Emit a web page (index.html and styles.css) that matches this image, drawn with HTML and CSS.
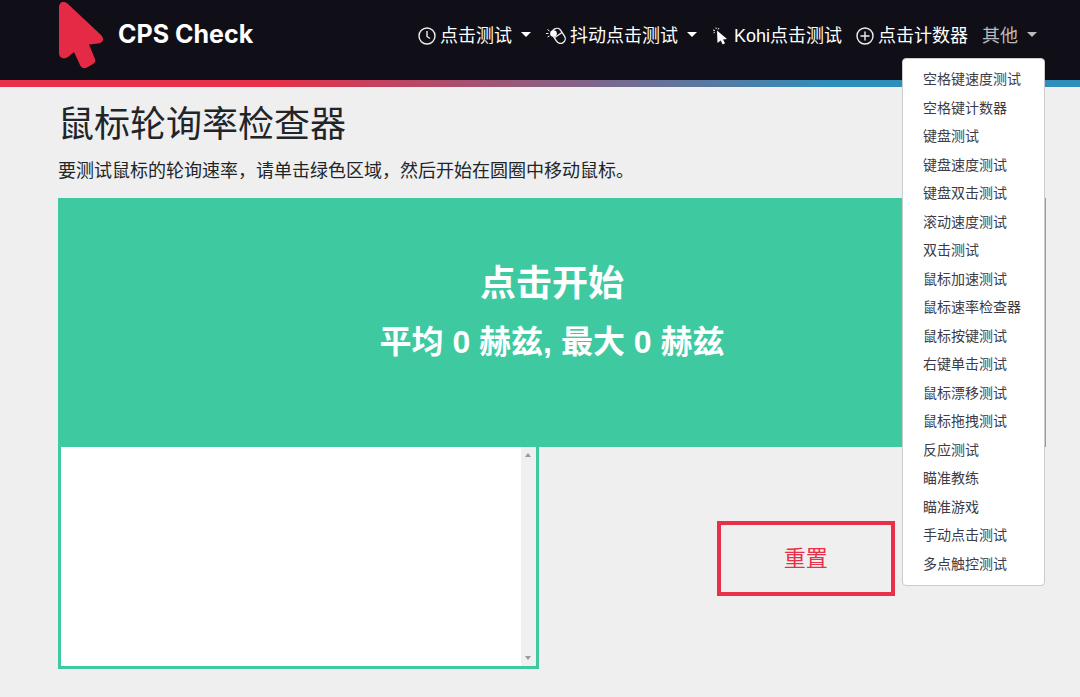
FILE: index.html
```html
<!DOCTYPE html>
<html lang="zh-CN">
<head>
	<meta charset="UTF-8">
	<meta name="viewport" content="width=device-width, initial-scale=1.0">
	<link rel="stylesheet" href="styles.css">
	<title>CPS Check</title>
</head>
<body>
	<header class="navbar">
		<a class="brand" href="#">
			<svg class="brand-logo" width="46" height="67" viewBox="0 0 46 67">
				<path d="M1 5C1 0 6-2 10 2L43 33C47 37 45 41 40 41.500L31 42.500L37 57C38 59 37 61 35 62L29 65.500C26 67 23 66 22 63L16 50L10 55C6 58 1 56 1 51Z"/>
			</svg>
			<span>CPS Check</span>
		</a>
		<nav class="nav">
			<a class="nav-link" href="#">
				<svg class="icon" width="18" height="18" viewBox="0 0 18 18"><circle cx="9" cy="9" r="8"/><path d="M9 4v5.500l3 2"/></svg>
				点击测试<span class="caret"></span>
			</a>
			<a class="nav-link" href="#">
				<svg class="icon" width="20" height="18" viewBox="0 0 20 18"><rect x="8" y="1" width="9.500" height="16" rx="4.700" transform="rotate(-33 12.500 9)"/><path d="M8 11L16 5.500"/><circle class="fill" cx="7.500" cy="6.500" r="3.300"/><path d="M1.500 2.500l2 1.500M0 6.500h2.500M1.500 10l2-1" stroke-width="1"/></svg>
				抖动点击测试<span class="caret"></span>
			</a>
			<a class="nav-link" href="#">
				<svg class="icon" width="18" height="18" viewBox="0 0 18 18"><path class="fill" d="M5 3.500L15 12L11 12.400L13 16.200L10.700 17.400L8.700 13.400L5.500 16Z"/><path d="M1 3l2 .5M4 .5l.3 1.500M1.500 6l1.500-1M7 1l-1 1.500" stroke-width="1"/></svg>
				Kohi点击测试
			</a>
			<a class="nav-link" href="#">
				<svg class="icon" width="18" height="18" viewBox="0 0 18 18"><circle cx="9" cy="9" r="8"/><path d="M9 4.500v9M4.500 9h9"/></svg>
				点击计数器
			</a>
			<div class="dropdown">
				<a class="nav-link active" href="#">其他<span class="caret"></span></a>
				<ul class="dropdown-menu">
					<li><a href="#">空格键速度测试</a></li>
					<li><a href="#">空格键计数器</a></li>
					<li><a href="#">键盘测试</a></li>
					<li><a href="#">键盘速度测试</a></li>
					<li><a href="#">键盘双击测试</a></li>
					<li><a href="#">滚动速度测试</a></li>
					<li><a href="#">双击测试</a></li>
					<li><a href="#">鼠标加速测试</a></li>
					<li><a href="#">鼠标速率检查器</a></li>
					<li><a href="#">鼠标按键测试</a></li>
					<li><a href="#">右键单击测试</a></li>
					<li><a href="#">鼠标漂移测试</a></li>
					<li><a href="#">鼠标拖拽测试</a></li>
					<li><a href="#">反应测试</a></li>
					<li><a href="#">瞄准教练</a></li>
					<li><a href="#">瞄准游戏</a></li>
					<li><a href="#">手动点击测试</a></li>
					<li><a href="#">多点触控测试</a></li>
				</ul>
			</div>
		</nav>
	</header>
	<div class="stripe"></div>

	<main class="container">
		<h1>鼠标轮询率检查器</h1>
		<p class="intro">要测试鼠标的轮询速率，请单击绿色区域，然后开始在圆圈中移动鼠标。</p>
		<button class="click-area" type="button">
			<span class="start">点击开始</span>
			<span class="rate">平均 0 赫兹, 最大 0 赫兹</span>
		</button>
		<div class="row">
			<div class="log">
				<textarea aria-label="赫兹" readonly></textarea>
				<div class="scrollbar">
					<span class="arrow-up"></span>
					<span class="arrow-down"></span>
				</div>
			</div>
			<div class="col">
				<button class="reset" type="button">重置</button>
			</div>
		</div>
	</main>
</body>
</html>
```

FILE: styles.css
```css
*{
	margin: 0;
	padding: 0;
	box-sizing: border-box;
}
body{
	background-color: #efefef;
	color: #212529;
	font-family: "Liberation Sans", "Noto Sans CJK SC", sans-serif;
	font-size: 18px;
	line-height: 28px;
}
a{
	color: inherit;
	text-decoration: none;
}
.navbar{
	display: flex;
	align-items: center;
	justify-content: space-between;
	padding: 2px 35px 11px 58px;
	background-color: #100f17;
	color: #fff;
}
.brand{
	display: flex;
	gap: 14px;
	font-family: Inter, Roboto, sans-serif;
	font-size: 25px;
	font-weight: 700;
	line-height: 64px;
}
.brand-logo{
	fill: #e52a46;
}
.nav{
	display: flex;
	align-items: center;
	white-space: nowrap;
}
.nav-link{
	display: flex;
	align-items: center;
	padding: 1px 7px 0;
}
.icon{
	margin-right: 4px;
	fill: none;
	stroke: #eee;
	stroke-width: 1.4;
	overflow: visible;
}
.icon .fill{
	fill: #fff;
	stroke: none;
}
.caret{
	margin: 0 1px 4px 9px;
	border: 5px solid transparent;
	border-top-color: currentColor;
	border-bottom: 0;
}
.active{
	color: #bbb;
}

/* open menu */
.dropdown{
	position: relative;
}
.dropdown-menu{
	position: absolute;
	z-index: 10;
	top: 37px;
	right: 0;
	display: flex;
	flex-direction: column;
	justify-content: space-between;
	min-width: 143px;
	min-height: 528px;
	padding: 6px 20px 7px;
	border: 1px solid #ccc;
	border-radius: 4px;
	background-color: #fff;
	color: #3c3b46;
	font-size: 14px;
	list-style: none;
}
.stripe{
	height: 7px;
	background: linear-gradient(90deg, #e83048 25%, #308ebb 77%);
}

.container{
	padding: 10px 34px 28px 58px;
}
h1{
	font-size: 36px;
	font-weight: 400;
	line-height: 56px;
}
.intro{
	margin: 4px 0 13px;
}
.click-area{
	display: flex;
	flex-direction: column;
	align-items: center;
	width: 100%;
	padding: 56px 0 75px;
	border: 0;
	background-color: #3ec9a0;
	color: #fff;
	font-family: inherit;
	font-weight: 700;
	line-height: 59px;
	cursor: pointer;
}
.start{
	font-size: 36px;
}
.rate{
	font-size: 32px;
}
.row{
	display: grid;
	grid-template-columns: 1fr 1fr;
	gap: 27px;
}
.log{
	display: flex;
	border: 3px solid #3ec9a0;
	border-top: 0;
	background-color: #fff;
}
.log textarea{
	flex: 1;
	min-width: 0;
	height: 219px;
	border: 0;
	resize: none;
	outline: none;
}
.scrollbar{
	display: flex;
	flex-direction: column;
	justify-content: space-between;
	align-items: center;
	width: 15px;
	padding: 6px 0;
	background-color: #f0f0f0;
}
.arrow-up, .arrow-down{
	border: 3px solid transparent;
}
.arrow-up{
	border-top: 0;
	border-bottom: 4px solid #999;
}
.arrow-down{
	border-bottom: 0;
	border-top: 4px solid #999;
}
.col{
	display: flex;
	align-items: center;
	justify-content: center;
}
.reset{
	padding: 20px 63px;
	border: 4px solid #e83049;
	background: none;
	color: #e83049;
	font-family: inherit;
	font-size: 22px;
	line-height: 27px;
	cursor: pointer;
}
```
